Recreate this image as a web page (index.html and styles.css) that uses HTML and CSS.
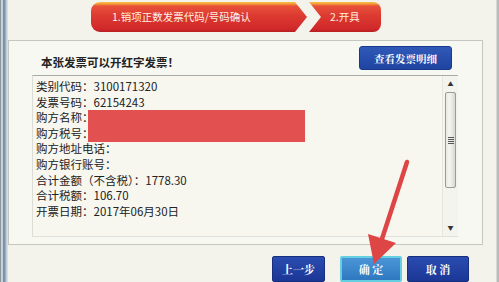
FILE: index.html
```html
<!DOCTYPE html>
<html lang="zh">
<head>
<meta charset="utf-8">
<link rel="stylesheet" href="styles.css">
</head>
<body>
<div class="window">
  <div class="frame-left"></div>
  <div class="main">
    <div class="steps">
      <div class="step step-first">1.销项正数发票代码/号码确认</div>
      <div class="step step-second">2.开具</div>
    </div>
    <div class="panel">
      <div class="panel-head">
        <div class="title">本张发票可以开红字发票！</div>
        <button class="btn btn-detail">查看发票明细</button>
      </div>
      <div class="list">
        <div class="rows">
          <div class="row">类别代码：3100171320</div>
          <div class="row">发票号码：62154243</div>
          <div class="row">购方名称：<span class="redact"></span></div>
          <div class="row">购方税号：</div>
          <div class="row">购方地址电话：</div>
          <div class="row">购方银行账号：</div>
          <div class="row">合计金额（不含税）：1778.30</div>
          <div class="row">合计税额：106.70</div>
          <div class="row">开票日期：2017年06月30日</div>
        </div>
        <div class="scrollbar">
          <div class="sb-arrow">&#9650;</div>
          <div class="sb-track">
            <div class="sb-thumb"><span class="grip"></span></div>
          </div>
          <div class="sb-arrow">&#9660;</div>
        </div>
      </div>
    </div>
    <div class="actions">
      <button class="btn btn-act">上一步</button>
      <button class="btn btn-act btn-ok">确 定</button>
      <button class="btn btn-act">取 消</button>
    </div>
  </div>
  <div class="frame-right"></div>
  <svg class="pointer" width="499" height="282" viewBox="0 0 499 282">
    <line x1="407" y1="162" x2="381" y2="242" stroke="#de4545" stroke-width="4.5" stroke-linecap="round"/>
    <polygon points="374,264 368,234 396,243" fill="#de4545"/>
  </svg>
</div>
</body>
</html>
```
FILE: styles.css
```css
* { box-sizing: border-box; }
html, body { margin: 0; padding: 0; }
body {
  width: 499px;
  height: 282px;
  overflow: hidden;
  font-family: "Noto Sans CJK SC", "Noto Sans", sans-serif;
  background: #f3f3ec;
}
.window {
  position: relative;
  display: flex;
  width: 499px;
  height: 282px;
  background: #f3f3ec;
}
.frame-left {
  width: 8px;
  flex: none;
  background: linear-gradient(to right, #8d969c 0, #8d969c 1px, #c9d2d8 1px, #c9d2d8 3px, #6f8ea6 3px, #7d9cb4 5px, #b8c6d0 6px, #e4e6e2 8px);
}
.frame-right {
  width: 3px;
  flex: none;
  background: linear-gradient(to right, #e7e7e0, #a9adb0 2px, #c3c8cb);
}
.main {
  flex: 1;
  display: flex;
  flex-direction: column;
}
.steps {
  height: 40px;
  display: flex;
  align-items: flex-start;
  padding: 2px 0 0 83px;
  gap: 2px;
}
.step {
  height: 30px;
  color: #fff0e0;
  font-size: 10.5px;
  line-height: 30px;
  background: linear-gradient(to bottom, #f7c04a 0, #f09a35 2px, #e8503a 4px, #dc3a30 14px, #d0282a 27px, #b81e22 30px);
}
.step-first {
  width: 216px;
  padding-left: 21px;
  border-radius: 9px 0 0 9px;
  clip-path: polygon(0 0, 204px 0, 216px 50%, 204px 100%, 0 100%);
}
.step-second {
  width: 72px;
  padding-left: 21px;
  border-radius: 0 8px 8px 0;
  clip-path: polygon(0 0, 100% 0, 100% 100%, 0 100%, 12px 50%);
}
.panel {
  width: 475px;
  height: 205px;
  border: 1px solid #c4c6c0;
  background: #f8f8f2;
  padding: 5px 24px 7px 23px;
  display: flex;
  flex-direction: column;
}
.panel-head {
  height: 29px;
  display: flex;
  justify-content: space-between;
  align-items: flex-start;
}
.title {
  font-size: 11.5px;
  font-weight: bold;
  color: #222;
  padding: 9px 0 0 9px;
  line-height: 14px;
}
.btn {
  font-family: "Noto Serif CJK SC", "Noto Sans CJK SC", serif;
  color: #fff;
  font-weight: bold;
  cursor: pointer;
  padding: 0;
}
.btn-detail {
  width: 93px;
  height: 24px;
  margin-right: 6px;
  background: linear-gradient(to bottom, #3059b8, #1f43a0);
  border: 1px solid #173a8c;
  border-radius: 3px;
  font-size: 10.5px;
}
.list {
  flex: 1;
  display: flex;
  border-top: 1px solid #a9aba6;
  border-left: 1px solid #dcddd6;
  border-bottom: 1px solid #e0e1da;
  background: #f7f7f0;
}
.rows {
  flex: 1;
  padding: 3px 0 0 3px;
}
.row {
  font-size: 11.5px;
  line-height: 15.6px;
  height: 15.6px;
  color: #222;
  display: flex;
  align-items: flex-start;
  white-space: nowrap;
}
.redact {
  display: block;
  width: 217px;
  height: 32px;
  margin-left: -6px;
  background: #e25050;
  flex: none;
}
.scrollbar {
  width: 16px;
  display: flex;
  flex-direction: column;
  align-items: center;
  background: #f4f4ee;
  border-left: 1px solid #e6e6df;
}
.sb-arrow {
  height: 16px;
  font-size: 6px;
  line-height: 16px;
  color: #333;
}
.sb-track {
  flex: 1;
  width: 100%;
  padding: 0 2px;
}
.sb-thumb {
  height: 96px;
  border: 1px solid #9a9c98;
  border-radius: 2px;
  background: linear-gradient(to right, #e8e8e2, #f6f6f0 40%, #d8d8d2);
  display: flex;
  align-items: center;
  justify-content: center;
}
.grip {
  width: 6px;
  height: 7px;
  background: repeating-linear-gradient(to bottom, #555 0, #555 1px, transparent 1px, transparent 2px);
}
.actions {
  display: flex;
  justify-content: flex-end;
  gap: 5px;
  padding: 11px 27px 0 0;
}
.btn-act {
  width: 62px;
  height: 26px;
  font-size: 11px;
  background: linear-gradient(to bottom, #2a4cb0, #1b3796);
  border: 1px solid #16307e;
  border-radius: 2px;
}
.btn-act:first-child { width: 53px; margin-right: 10px; }
.btn-ok {
  background: linear-gradient(to bottom, #4a95d6, #2f78c0);
  border: 2px solid #63cfe0;
}
.pointer {
  position: absolute;
  left: 0;
  top: 0;
  pointer-events: none;
}
```
